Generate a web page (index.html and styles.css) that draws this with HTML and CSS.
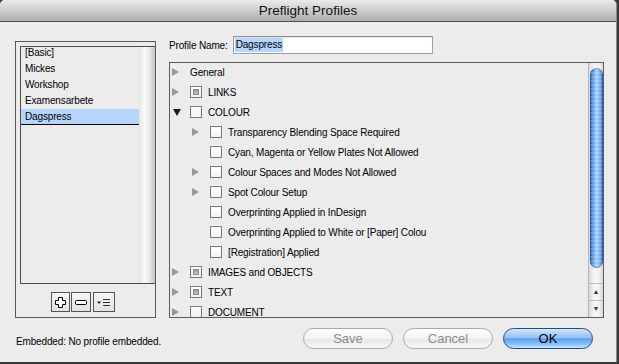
FILE: index.html
```html
<!DOCTYPE html>
<html lang="en">
<head>
    <meta charset="UTF-8">
    <title>Preflight Profiles</title>
    <link rel="stylesheet" href="styles.css">
</head>
<body>

<div class="window">
    <div class="titlebar">Preflight Profiles</div>

    <div class="main">
        <div class="profiles">
            <div class="profile-list">
                <ul class="items">
                    <li>[Basic]</li>
                    <li>Mickes</li>
                    <li>Workshop</li>
                    <li>Examensarbete</li>
                    <li class="selected">Dagspress</li>
                </ul>
                <div class="gutter"></div>
            </div>
            <div class="list-tools">
                <button class="tool tool-add">
                    <svg width="11" height="11" viewBox="0 0 11 11"><path d="M3.5 0.5h4v3h3v4h-3v3h-4v-3h-3v-4h3z" fill="#fff" stroke="#000"/></svg>
                </button>
                <button class="tool tool-remove">
                    <svg width="12" height="5" viewBox="0 0 12 5"><rect x="0.5" y="0.5" width="11" height="4" rx="1" fill="#fff" stroke="#000"/></svg>
                </button>
                <button class="tool tool-menu">
                    <svg width="14" height="9" viewBox="0 0 14 9"><path d="M0 3.5h4l-2 2.5z" fill="#222"/><path d="M6 1.5h7M6 4.5h7M6 7.5h7" stroke="#333" stroke-width="1"/></svg>
                </button>
            </div>
        </div>

        <div class="editor">
            <div class="name-row">
                <span class="label">Profile Name:</span>
                <div class="name-field"><span class="sel">Dagspress</span></div>
            </div>

            <div class="tree">
                <div class="rows">
                    <div class="row lvl0"><span class="twisty"></span><span class="text">General</span></div>
                    <div class="row lvl0"><span class="twisty"></span><span class="check mixed"></span><span class="text">LINKS</span></div>
                    <div class="row lvl0"><span class="twisty open"></span><span class="check"></span><span class="text">COLOUR</span></div>
                    <div class="row lvl1"><span class="twisty"></span><span class="check"></span><span class="text">Transparency Blending Space Required</span></div>
                    <div class="row lvl1"><span class="twisty none"></span><span class="check"></span><span class="text">Cyan, Magenta or Yellow Plates Not Allowed</span></div>
                    <div class="row lvl1"><span class="twisty"></span><span class="check"></span><span class="text">Colour Spaces and Modes Not Allowed</span></div>
                    <div class="row lvl1"><span class="twisty"></span><span class="check"></span><span class="text">Spot Colour Setup</span></div>
                    <div class="row lvl1"><span class="twisty none"></span><span class="check"></span><span class="text">Overprinting Applied in InDesign</span></div>
                    <div class="row lvl1"><span class="twisty none"></span><span class="check"></span><span class="text">Overprinting Applied to White or [Paper] Colou</span></div>
                    <div class="row lvl1"><span class="twisty none"></span><span class="check"></span><span class="text">[Registration] Applied</span></div>
                    <div class="row lvl0"><span class="twisty"></span><span class="check mixed"></span><span class="text">IMAGES and OBJECTS</span></div>
                    <div class="row lvl0"><span class="twisty"></span><span class="check mixed"></span><span class="text">TEXT</span></div>
                    <div class="row lvl0"><span class="twisty"></span><span class="check"></span><span class="text">DOCUMENT</span></div>
                </div>
                <div class="scrollbar">
                    <div class="track-top"></div>
                    <div class="thumb"></div>
                    <div class="track-rest"></div>
                    <div class="arrow">&#9650;</div>
                    <div class="arrow">&#9660;</div>
                </div>
            </div>
        </div>
    </div>

    <div class="footer">
        <span class="status">Embedded: No profile embedded.</span>
        <div class="buttons">
            <button class="push disabled">Save</button>
            <button class="push disabled">Cancel</button>
            <button class="push default">OK</button>
        </div>
    </div>
</div>

</body>
</html>
```

FILE: styles.css
```css
body {
    margin: 0;
    background: #3a3a3a;
    font-family: 'Liberation Sans', Arial, sans-serif;
    font-size: 10px;
    letter-spacing: -0.15px;
    color: #000;
}
ul {
    list-style: none;
    margin: 0;
    padding: 0;
}
button {
    font-family: inherit;
    padding: 0;
    margin: 0;
    cursor: default;
}
.window {
    width: 617px;
    height: 362px;
    box-sizing: border-box;
    background: #ececec;
    border-right: 1px solid #8a8a8a;
    border-radius: 5px 5px 0 0;
    overflow: hidden;
    display: flex;
    flex-direction: column;
}
.titlebar {
    height: 21px;
    line-height: 22px;
    border-bottom: 1px solid #4f4f4f;
    background: linear-gradient(#ebebeb, #cdcdcd 50%, #adadad);
    text-align: center;
    font-size: 13.5px;
    letter-spacing: 0;
    color: #111;
}
.main {
    display: flex;
    align-items: flex-start;
    gap: 13px;
    padding-left: 15px;
}

/* profile list */
.profiles {
    margin-top: 19px;
    width: 141px;
    height: 277px;
    box-sizing: border-box;
    border: 1px solid #5a5a5a;
}
.profile-list {
    margin: 4px 0 0 4px;
    height: 238px;
    box-sizing: border-box;
    border: 1px solid #4e4e4e;
    border-right: none;
    display: flex;
    overflow: hidden;
}
.items {
    flex: 1;
    margin-top: -2px;
}
.items li {
    height: 16px;
    line-height: 16px;
    padding-left: 4px;
}
.items li.selected {
    background: #b5d5ff;
    height: 15px;
    line-height: 16px;
    border-bottom: 1px solid #000;
}
.gutter {
    width: 16px;
    background: linear-gradient(to right, #e4e4e4, #fbfbfb 35%, #eeeeee 60%, #c2c2c2);
}
.list-tools {
    display: flex;
    gap: 1px;
    margin-top: 8px;
    padding-left: 35px;
}
.tool {
    height: 20px;
    border: 1px solid #555;
    background: linear-gradient(#f6f6f6, #e2e2e2);
    display: flex;
    align-items: center;
    justify-content: center;
}
.tool-add { width: 19px; }
.tool-remove { width: 20px; }
.tool-menu { width: 22px; margin-left: 1px; }

/* right side */
.editor {
    margin-top: 14px;
    width: 435px;
}
.name-row {
    display: flex;
    align-items: center;
    height: 18px;
}
.label {
    margin-right: 5px;
}
.name-field {
    width: 200px;
    height: 18px;
    box-sizing: border-box;
    border: 1px solid #a0a0a0;
    border-top-color: #8a8a8a;
    background: #fff;
    box-shadow: inset 0 1px 1px rgba(0, 0, 0, 0.12);
    padding: 1px 0 0 1px;
    line-height: 14px;
}
.name-field .sel {
    display: inline-block;
    background: #b5d5ff;
    padding: 0 1px;
    height: 14px;
}
.tree {
    margin-top: 8px;
    height: 256px;
    box-sizing: border-box;
    border: 1px solid #5c5c5c;
    display: flex;
    overflow: hidden;
}
.rows {
    flex: 1;
    margin-top: -1px;
}
.row {
    height: 20px;
    display: flex;
    align-items: center;
    white-space: nowrap;
}
.lvl0 { padding-left: 2px; }
.lvl1 { padding-left: 22px; }
.twisty {
    width: 18px;
    height: 9px;
    flex: none;
}
.twisty::before {
    content: "";
    display: block;
    width: 0;
    height: 0;
    border-top: 4.5px solid transparent;
    border-bottom: 4.5px solid transparent;
    border-left: 7px solid #979797;
}
.twisty.open::before {
    margin: 1px 0 0 1px;
    border-left: 4.5px solid transparent;
    border-right: 4.5px solid transparent;
    border-top: 7px solid #1e1e1e;
    border-bottom: none;
}
.twisty.none::before {
    display: none;
}
.check {
    width: 12px;
    height: 12px;
    box-sizing: border-box;
    border: 1px solid #7c7c7c;
    background: linear-gradient(#fdfdfd, #f2f2f2);
    margin-right: 6px;
    flex: none;
    display: flex;
    align-items: center;
    justify-content: center;
}
.check.mixed::after {
    content: "";
    width: 4px;
    height: 4px;
    border: 1px solid #8a8a8a;
    background: linear-gradient(#9a9a9a, #c8c8c8);
}
.scrollbar {
    width: 14px;
    flex: none;
    border-left: 1px solid #b4b4b4;
    display: flex;
    flex-direction: column;
    background: linear-gradient(to right, #dadada, #f7f7f7 40%, #f2f2f2 70%, #d8d8d8);
}
.track-top {
    height: 5px;
}
.thumb {
    height: 200px;
    margin: 0 0.5px;
    border-radius: 7px;
    background:
        repeating-linear-gradient(rgba(255, 255, 255, 0.18) 0 2px, transparent 2px 4px),
        linear-gradient(to right, #2656b8, #5c98e6 22%, #a9d2fb 50%, #70acf0 78%, #2c5fc2);
    box-shadow: inset 0 0 0 1px rgba(20, 60, 150, 0.45);
}
.track-rest {
    flex: 1;
}
.arrow {
    height: 16px;
    line-height: 16px;
    border-top: 1px solid #bdbdbd;
    text-align: center;
    font-size: 7px;
    color: #333;
    letter-spacing: 0;
}

/* footer */
.footer {
    margin-top: 10px;
    height: 21px;
    display: flex;
    align-items: center;
    justify-content: space-between;
    padding: 0 23px 0 16px;
}
.status {
    padding-top: 6px;
}
.buttons {
    display: flex;
    gap: 10px;
}
.push {
    width: 90px;
    height: 21px;
    border-radius: 11px;
    font-size: 13px;
    letter-spacing: 0;
    line-height: 19px;
}
.push.disabled {
    border: 1px solid #a9a9a9;
    background: linear-gradient(#fefefe, #f3f3f3 50%, #e7e7e7 52%, #f7f7f7);
    color: #8c8c8c;
}
.push.default {
    border: 1px solid #2a4a86;
    background: linear-gradient(#d2e7fc, #92c2f3 45%, #5b9fec 52%, #8cc6fb 82%, #c8ecff);
    color: #000;
}
```
